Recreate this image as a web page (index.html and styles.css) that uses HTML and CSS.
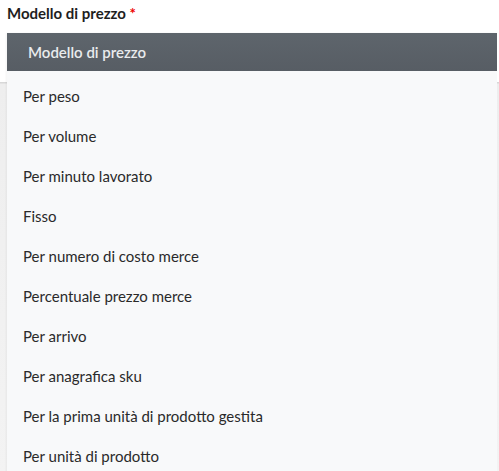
FILE: index.html
```html
<!DOCTYPE html>
<html>
<head>
<meta charset="utf-8">
<link rel="stylesheet" href="styles.css">
</head>
<body>
<div class="field">
  <label class="label">Modello di prezzo <span class="req">*</span></label>
  <div class="backdrop">
    <div class="menu">
      <div class="menu-head">Modello di prezzo</div>
      <ul class="options">
        <li>Per peso</li>
        <li>Per volume</li>
        <li>Per minuto lavorato</li>
        <li>Fisso</li>
        <li>Per numero di costo merce</li>
        <li>Percentuale prezzo merce</li>
        <li>Per arrivo</li>
        <li>Per anagrafica sku</li>
        <li>Per la prima unità di prodotto gestita</li>
        <li>Per unità di prodotto</li>
      </ul>
    </div>
  </div>
</div>
</body>
</html>
```
FILE: styles.css
```css
html, body {
  margin: 0;
  padding: 0;
  background: #ffffff;
  font-family: Lato, "Noto Sans", sans-serif;
  overflow: hidden;
}
.field {
  display: flex;
  flex-direction: column;
}
.label {
  display: block;
  padding: 4px 0 0 7px;
  height: 33px;
  box-sizing: border-box;
  font-weight: 700;
  font-size: 15px;
  color: #1e1e1e;
}
.req {
  color: #ee0000;
}
.backdrop {
  padding-left: 7px;
  background: linear-gradient(#ffffff 0, #ffffff 49px, #d8d8d8 49px, #d8d8d8 50px, #eeeeee 51px, #f3f3f3 100%);
}
.menu {
  background: #f8f9fa;
  box-shadow: -1px 0 2px rgba(0,0,0,0.05);
  margin-right: 2px;
}
.menu-head {
  height: 38px;
  display: flex;
  align-items: center;
  padding-left: 21px;
  background: linear-gradient(#5e656c, #575d64);
  color: #e9ebed;
  font-size: 15px;
  font-weight: 600;
}
.options {
  list-style: none;
  margin: 0;
  padding: 5px 0 0 0;
}
.options li {
  height: 40px;
  line-height: 40px;
  padding-left: 16px;
  font-size: 15px;
  color: #2a2a2a;
}
```
